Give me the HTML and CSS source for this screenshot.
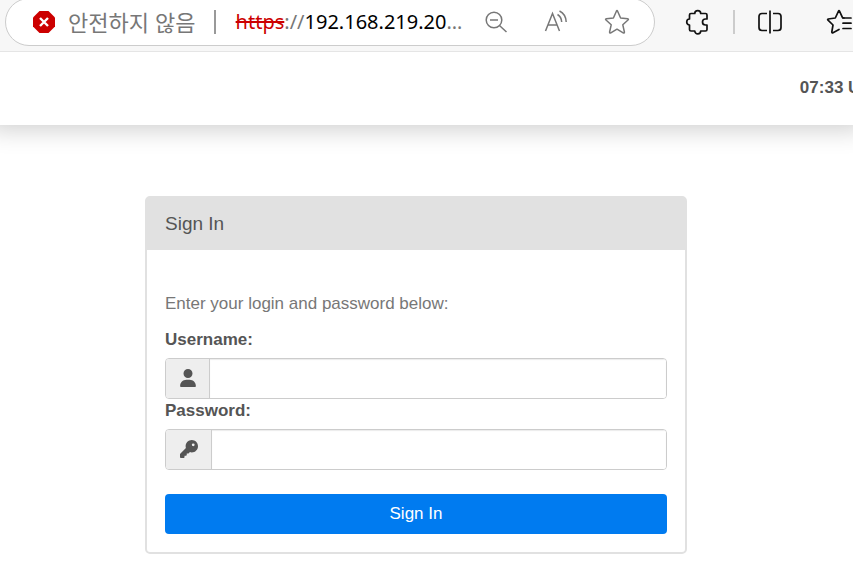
FILE: index.html
```html
<!DOCTYPE html>
<html lang="en">
<head>
    <meta charset="UTF-8">
    <meta name="viewport" content="width=device-width, initial-scale=1.0">
    <title>Sign In</title>
    <link rel="stylesheet" href="styles.css">
</head>
<body>
    <div class="toolbar">
        <div class="address-bar">
            <button type="button" class="security">
                <svg width="24" height="24" viewBox="0 0 24 24" aria-hidden="true">
                    <path d="M7.5 1h9L23 7.500v9L16.500 23h-9L1 16.500v-9z" fill="#c00"/>
                    <path d="M8 8l8 8M16 8l-8 8" stroke="#fff" stroke-width="2.400"/>
                </svg>
                <span class="security-text" lang="ko">안전하지 않음</span>
            </button>
            <span class="divider"></span>
            <div class="url"><s>https</s>://<span class="host">192.168.219.20</span>…</div>
            <button type="button" class="bar-icon" aria-label="Zoom out">
                <svg width="24" height="24" viewBox="0 0 24 24" fill="none" stroke="#777" stroke-width="1.500">
                    <circle cx="10" cy="10" r="7.800"/>
                    <path d="M6 10h8M15.700 15.700L22.500 22"/>
                </svg>
            </button>
            <button type="button" class="bar-icon" aria-label="Read aloud">
                <svg width="24" height="24" viewBox="0 0 24 24" fill="none" stroke="#777" stroke-width="1.500">
                    <path d="M1.500 21L8.500 3.500L15.500 21M4 15h9"/>
                    <path d="M13.500 4.500C16 6 17.500 8.500 17.700 12M15.500 1C19.500 3 22 7 22.200 12"/>
                </svg>
            </button>
            <button type="button" class="bar-icon" aria-label="Add to favorites">
                <svg width="26" height="26" viewBox="0 0 26 26" fill="none" stroke="#777" stroke-width="1.500" stroke-linejoin="round">
                    <path d="M12.400 2.200Q13 1 13.600 2.200L16.600 9L23.700 9.700Q25 10 24 11L18.800 15.800L20.400 23Q20.500 24.400 19.200 23.900L13 20.200L6.800 23.900Q5.500 24.400 5.600 23L7.200 15.800L2 11Q1 10 2.300 9.700L9.400 9z"/>
                </svg>
            </button>
        </div>
        <div class="toolbar-actions">
            <button type="button" class="bar-icon" aria-label="Extensions">
                <svg width="26" height="26" viewBox="0 0 26 26" fill="none" stroke="#111" stroke-width="1.700" stroke-linejoin="round">
                    <path d="M5.500 4.500H9.800C9.800 .6 15.700 .6 15.700 4.500H20.500Q22 4.500 22 6V10H20.500C16.500 10 16.500 16 20.500 16H22V20.500Q22 22 20.500 22H15.700C15.700 25.800 9.800 25.800 9.800 22H6Q4.500 22 4.500 20.500V16C.8 16 .8 10 4.500 10V6Q4.500 4.500 6 4.500"/>
                </svg>
            </button>
            <span class="divider divider-light"></span>
            <button type="button" class="bar-icon" aria-label="Split screen">
                <svg width="26" height="26" viewBox="0 0 26 26" fill="none" stroke="#111" stroke-width="1.700">
                    <path d="M10 4.500H5Q2 4.500 2 7.500V18.500Q2 21.500 5 21.500H10M16 4.500H21Q24 4.500 24 7.500V18.500Q24 21.500 21 21.500H16M13 1.500V24.500"/>
                </svg>
            </button>
            <button type="button" class="bar-icon" aria-label="Favorites">
                <svg width="26" height="26" viewBox="0 0 26 26" fill="none" stroke="#111" stroke-width="1.700" stroke-linejoin="round" stroke-linecap="round">
                    <path d="M18 9L16.500 8.700L13.500 2.200Q13 1.200 12.500 2.200L9.300 9L2.200 10Q1.200 10.300 2 11.200L7 16L5.800 23Q5.900 24.200 7 23.700L13 20.500"/>
                    <path d="M17 9H25M17 14.200H25M17 19.500H25"/>
                </svg>
            </button>
        </div>
    </div>

    <header class="site-header">
        <span class="clock">07:33 UTC</span>
    </header>

    <main>
        <section class="card">
            <h1>Sign In</h1>
            <form class="login-form">
                <p>Enter your login and password below:</p>
                <label for="username">Username:</label>
                <div class="input-group">
                    <span class="addon">
                        <svg width="16" height="18" viewBox="0 0 448 512" fill="#555" aria-hidden="true">
                            <path d="M224 256a128 128 0 1 0 0-256 128 128 0 1 0 0 256zm-46 48C80 304 0 384 0 482c0 17 13 30 30 30h388c17 0 30-13 30-30 0-98-80-178-178-178z"/>
                        </svg>
                    </span>
                    <input type="text" id="username" name="username">
                </div>
                <label for="password">Password:</label>
                <div class="input-group">
                    <span class="addon">
                        <svg width="18" height="18" viewBox="0 0 512 512" fill="#555" aria-hidden="true">
                            <path d="M336 352c97 0 176-79 176-176S433 0 336 0 160 79 160 176c0 19 3 37 8 54L7 391c-4 4-7 10-7 17v80c0 13 11 24 24 24h80c13 0 24-11 24-24v-40h40c13 0 24-11 24-24v-40h40c6 0 12-3 17-7l33-33c17 5 35 8 54 8zM376 96a40 40 0 1 1 0 80 40 40 0 1 1 0-80z"/>
                        </svg>
                    </span>
                    <input type="password" id="password" name="password">
                </div>
                <button type="submit" class="submit-btn">Sign In</button>
            </form>
        </section>
    </main>
</body>
</html>
```
FILE: styles.css
```css
* {
    box-sizing: border-box;
}

body {
    margin: 0;
    background-color: #fff;
    color: #777;
    font-family: "Liberation Sans", Arial, sans-serif;
    font-size: 17px;
    line-height: 24px;
    overflow-x: hidden;
}

button {
    border: none;
    padding: 0;
    background: none;
    font: inherit;
    cursor: pointer;
}

svg {
    display: block;
    flex-shrink: 0;
}

/* Browser toolbar */
.toolbar {
    position: relative;
    z-index: 1;
    display: flex;
    align-items: flex-start;
    height: 52px;
    padding-left: 5px;
    background-color: #f7f7f7;
    border-bottom: 1px solid #e5e5e5;
    overflow: hidden;
}

.address-bar {
    flex: 1;
    display: flex;
    align-items: center;
    height: 48px;
    margin-top: -2px;
    padding: 0 24px 0 26px;
    background-color: #fff;
    border: 1px solid #ccc;
    border-radius: 24px;
    white-space: nowrap;
}

.security {
    display: flex;
    align-items: center;
    gap: 12px;
}

.security-text {
    padding-bottom: 3px;
    color: #777;
    font-family: "Noto Sans CJK KR", sans-serif;
    font-size: 22px;
}

.divider {
    width: 2px;
    height: 24px;
    margin: 0 20px 0 18px;
    background-color: #999;
}

.url {
    flex: 1;
    color: #777;
    font-family: "Noto Sans", sans-serif;
    font-size: 20px;
}

.url s {
    color: #c00;
    text-decoration-thickness: 2px;
}

.host {
    color: #000;
}

.bar-icon {
    margin-left: 36px;
}

.url + .bar-icon {
    margin-left: 20px;
}

.toolbar-actions {
    display: flex;
    align-items: center;
    height: 44px;
    margin-right: 1px;
}

.toolbar-actions .bar-icon {
    flex-shrink: 0;
    margin-left: 30px;
}

.toolbar-actions .bar-icon:last-child {
    margin-left: 43px;
}

.toolbar-actions .divider + .bar-icon {
    margin-left: 22px;
}

.divider-light {
    margin: 0 0 0 22px;
    background-color: #ccc;
}

/* Site header */
.site-header {
    display: flex;
    justify-content: flex-end;
    align-items: center;
    height: 73px;
    padding-bottom: 2px;
    background-color: #fff;
    box-shadow: 0 -8px 24px 12px rgba(0, 0, 0, 0.2);
    overflow: hidden;
}

/* the clock runs past the right edge of the window */
.clock {
    margin-right: -30px;
    color: #555;
    font-weight: bold;
}

/* Sign in card */
main {
    padding: 71px 21px 8px 0;
}

.card {
    max-width: 542px;
    margin: 0 auto;
    border: 2px solid #e1e1e1;
    border-radius: 5px;
}

.card h1 {
    margin: 0;
    padding: 14px 18px;
    background-color: #e1e1e1;
    color: #555;
    font-size: 19px;
    font-weight: normal;
}

.login-form {
    padding: 42px 18px 18px;
}

.login-form p {
    margin: 0 0 12px;
}

.login-form label {
    display: block;
    margin-bottom: 6px;
    color: #555;
    font-weight: bold;
}

.input-group {
    display: flex;
    height: 41px;
    border: 1px solid #ccc;
    border-radius: 4px;
    overflow: hidden;
}

.addon {
    padding: 10px 13px 10px 14px;
    background-color: #eee;
    border-right: 1px solid #ccc;
}

.input-group input {
    flex: 1;
    min-width: 0;
    padding: 6px 12px;
    border: none;
    box-shadow: inset 0 1px 1px rgba(0, 0, 0, 0.08);
    font: inherit;
}

.submit-btn {
    width: 100%;
    height: 40px;
    margin-top: 24px;
    background-color: #007bf0;
    color: #fff;
    border-radius: 4px;
}

.submit-btn:hover {
    background-color: #0069d0;
}
```
